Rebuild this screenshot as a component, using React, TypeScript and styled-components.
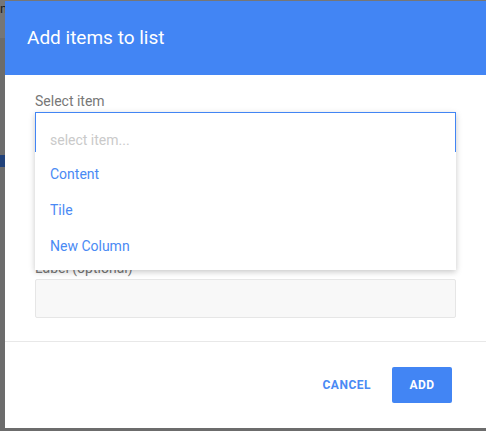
import React, { useState } from "react";
import styled, { createGlobalStyle } from "styled-components";

const GlobalStyle = createGlobalStyle`
  html, body {
    margin: 0;
    padding: 0;
    height: 100%;
    overflow: hidden;
  }
  body {
    font-family: Roboto, "Liberation Sans", Arial, sans-serif;
    background: #d9d9d9;
  }
  * {
    box-sizing: border-box;
  }
`;

// the page behind the dialog
const Page = styled.div`
  height: 100vh;
  display: flex;
  flex-direction: column;
`;

const TopBar = styled.header`
  height: 38px;
  background: #ededed;
  display: flex;
  align-items: flex-start;
  padding-top: 1px;
  font-size: 13px;
  color: #3a3a3a;
`;

const SideList = styled.nav`
  display: flex;
  flex-direction: column;
  padding-top: 117px;
`;

const SideItem = styled.div<{ $active?: boolean }>`
  height: 12px;
  width: 120px;
  background: ${(p) => (p.$active ? "#4285f4" : "transparent")};
`;

const Overlay = styled.div`
  position: fixed;
  inset: 0;
  background: rgba(0, 0, 0, 0.5);
`;

const Modal = styled.div`
  position: absolute;
  top: 1px;
  left: 5px;
  width: 481px;
  height: 427px;
  background: #fff;
  display: flex;
  flex-direction: column;
`;

const ModalHeader = styled.div`
  height: 74px;
  flex: none;
  background: #4285f4;
  display: flex;
  align-items: center;
  padding: 0 22px 2px;
`;

const Title = styled.h2`
  margin: 0;
  font-size: 19px;
  font-weight: 400;
  color: #fff;
`;

const ModalBody = styled.div`
  position: relative;
  padding: 18px 30px 23px;
  border-bottom: 1px solid #e8e8e8;
`;

const Field = styled.div<{ $gap?: number }>`
  display: flex;
  flex-direction: column;
  margin-top: ${(p) => p.$gap ?? 0}px;
`;

const Label = styled.label`
  font-size: 14px;
  line-height: 16px;
  color: #777;
  margin-bottom: 3px;
`;

const Input = styled.input`
  height: 39px;
  border: 1px solid #e6e6e6;
  border-radius: 2px;
  background: #f8f8f8;
  padding: 0 14px;
  font-family: inherit;
  font-size: 14px;
  outline: none;
`;

const Combo = styled.div`
  position: absolute;
  top: 37px;
  left: 30px;
  right: 30px;
  height: 158px;
  background: #fff;
  border-top: 1px solid #4285f4;
  box-shadow: 0 2px 6px rgba(0, 0, 0, 0.22);
  padding: 7px 0 6px;
  display: flex;
  flex-direction: column;

  &::before {
    content: "";
    position: absolute;
    top: -1px;
    left: 0;
    right: 0;
    height: 39px;
    border: 1px solid #4285f4;
    border-bottom: none;
    pointer-events: none;
  }
`;

const Search = styled.input`
  height: 36px;
  border: none;
  outline: none;
  background: transparent;
  padding: 3px 15px 0;
  font-family: inherit;
  font-size: 14px;
  color: #333;

  &::placeholder {
    color: #cacaca;
  }
`;

const Option = styled.div`
  height: 36px;
  display: flex;
  align-items: center;
  padding: 0 15px;
  font-size: 14px;
  color: #4a8af4;
  cursor: pointer;
`;

const ModalFooter = styled.div`
  flex: 1;
  display: flex;
  align-items: center;
  justify-content: flex-end;
  gap: 5px;
  padding: 0 34px 0 0;
`;

const Button = styled.button<{ $primary?: boolean }>`
  height: 36px;
  min-width: 60px;
  padding: 0 16px;
  border: none;
  border-radius: 2px;
  font-family: inherit;
  font-size: 12px;
  font-weight: 700;
  letter-spacing: 0.5px;
  text-transform: uppercase;
  cursor: pointer;
  background: ${(p) => (p.$primary ? "#4285f4" : "transparent")};
  color: ${(p) => (p.$primary ? "#fff" : "#4a8af4")};
`;

const items = ["Content", "Tile", "New Column"];

const App: React.FC = () => {
  const [query, setQuery] = useState("");
  const [label, setLabel] = useState("");

  return (
    <>
      <GlobalStyle />
      <Page>
        <TopBar>n</TopBar>
        <SideList>
          <SideItem $active />
        </SideList>
      </Page>
      <Overlay>
        <Modal>
          <ModalHeader>
            <Title>Add items to list</Title>
          </ModalHeader>
          <ModalBody>
            <Field>
              <Label>Select item</Label>
              <Input readOnly />
            </Field>
            <Field $gap={109}>
              <Label>Label (optional)</Label>
              <Input
                value={label}
                onChange={(e: React.ChangeEvent<HTMLInputElement>) =>
                  setLabel(e.target.value)
                }
              />
            </Field>
            <Combo>
              <Search
                placeholder="select item..."
                value={query}
                onChange={(e: React.ChangeEvent<HTMLInputElement>) =>
                  setQuery(e.target.value)
                }
              />
              {items
                .filter((i) => i.toLowerCase().includes(query.toLowerCase()))
                .map((i) => (
                  <Option key={i}>{i}</Option>
                ))}
            </Combo>
          </ModalBody>
          <ModalFooter>
            <Button>Cancel</Button>
            <Button $primary>Add</Button>
          </ModalFooter>
        </Modal>
      </Overlay>
    </>
  );
};

export default App;
